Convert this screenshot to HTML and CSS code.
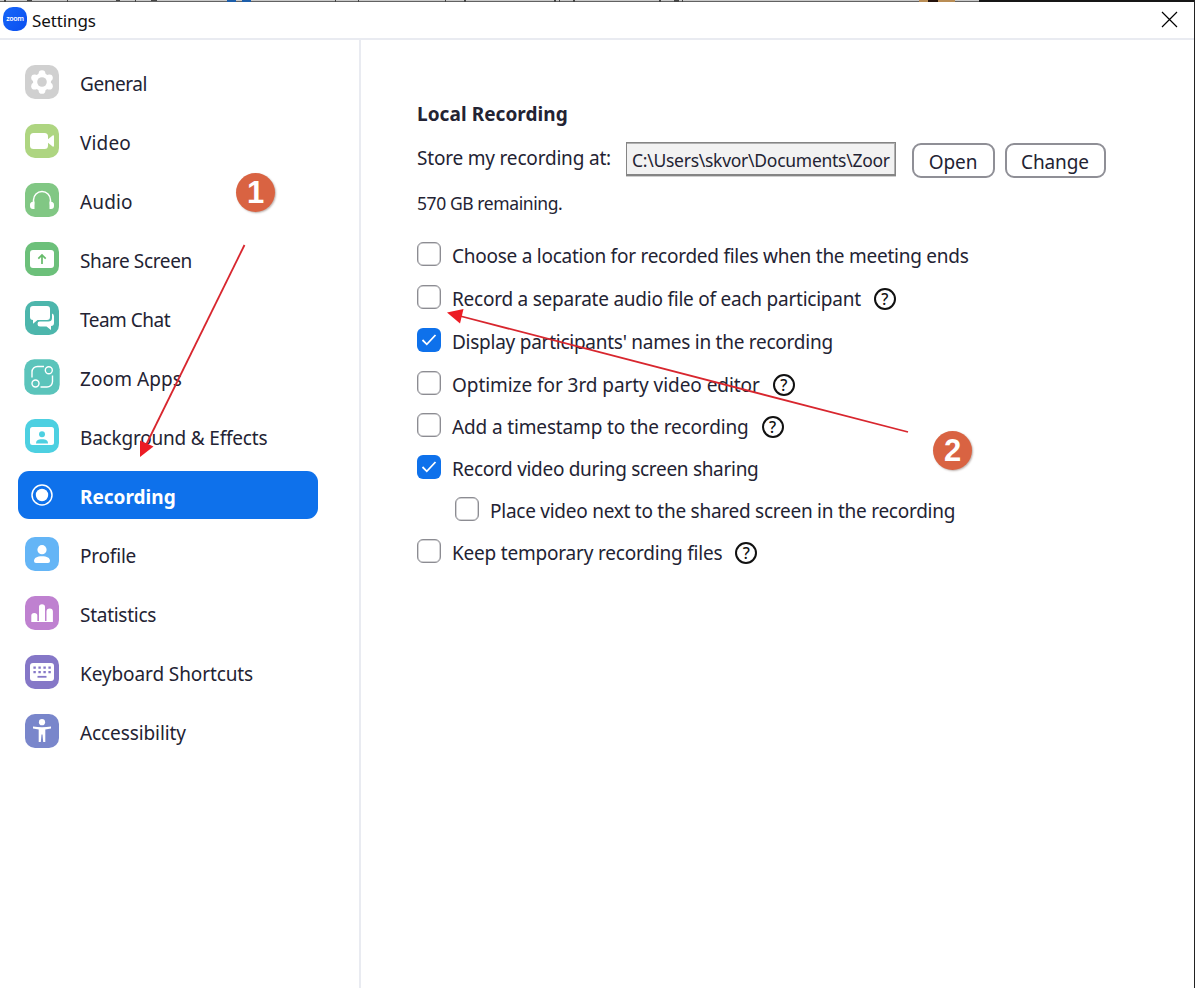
FILE: index.html
```html
<!DOCTYPE html>
<html lang="en">
<head>
<meta charset="utf-8">
<title>Settings</title>
<link rel="stylesheet" href="styles.css">
</head>
<body>
<div class="window">
  <svg class="backdrop" width="1195" height="2" viewBox="0 0 1195 2" shape-rendering="crispEdges">
    <path fill="#c9c9c9" d="M0 0h1195v1H0z"/><path fill="#626262" d="M0 1h1195v1H0z"/>
    <path fill="#444" d="M4 0h2v2H4zM27 0h5v1h-5zM67 0h1v2h-1zM116 0h4v1h-4zM135 0h1v2h-1zM151 0h6v1h-6zM335 0h1v2h-1zM358 0h1v2h-1zM445 0h1v2h-1zM464 0h2v2h-2zM554 0h2v2h-2zM559 0h1v2h-1zM573 0h2v2h-2zM659 0h2v2h-2zM674 0h5v2h-5zM682 0h1v2h-1z"/>
    <path fill="#1d5eaa" d="M227 0h9v2h-9zM242 0h9v2h-9z"/>
    <path fill="#b98d55" d="M919 0h36v2h-36z"/><path fill="#24120c" d="M928 0h10v2h-10z"/>
    <path fill="#161616" d="M979 0h216v2H979z"/>
  </svg>
  <header class="titlebar">
    <span class="logo">zoom</span>
    <h1 class="title">Settings</h1>
    <svg class="close" width="17" height="17" viewBox="0 0 17 17"><path d="M1 1l15 15M16 1L1 16" stroke="#000" stroke-width="1.2"/></svg>
  </header>
  <div class="body">
    <nav class="sidebar">
      <a class="item"><svg class="icon" viewBox="0 0 34 34"><rect width="34" height="34" rx="10" fill="#d0d0d0"/><g fill="#fff"><circle cx="17" cy="17" r="9"/><circle cx="17" cy="8.6" r="3.4"/><circle cx="17" cy="25.4" r="3.4"/><circle cx="9.6" cy="12.8" r="3.4"/><circle cx="24.4" cy="12.8" r="3.4"/><circle cx="9.6" cy="21.2" r="3.4"/><circle cx="24.4" cy="21.2" r="3.4"/></g><circle cx="17" cy="17" r="4.8" fill="#d0d0d0"/></svg><span class="label general">General</span></a>
      <a class="item"><svg class="icon" viewBox="0 0 34 34"><rect width="34" height="34" rx="10" fill="#aed581"/><rect x="5" y="9" width="18" height="16" rx="3.5" fill="#fff"/><path d="M23 15.2l4.6-3.6q1.4-.8 1.4.8v9.2q0 1.600-1.400.8L23 18.800z" fill="#fff"/></svg><span class="label video">Video</span></a>
      <a class="item"><svg class="icon" viewBox="0 0 34 34"><rect width="34" height="34" rx="10" fill="#81c784"/><path d="M8.500 21.500V17a8.500 8.500 0 0 1 17 0v4.500" fill="none" stroke="#fff" stroke-width="1.500"/><path d="M9.500 18.500v7.500H8a3 3 0 0 1-3-3v-1a3.200 3.200 0 0 1 3-3.200zM24.500 18.500v7.500H26a3 3 0 0 0 3-3v-1a3.200 3.200 0 0 0-3-3.200z" fill="#fff"/></svg><span class="label audio">Audio</span></a>
      <a class="item"><svg class="icon" viewBox="0 0 34 34"><rect width="34" height="34" rx="10" fill="#6cc07a"/><rect x="5" y="8" width="24" height="18" rx="3" fill="#fff"/><path d="M17 22v-8.500M13.300 16.600L17 13l3.700 3.600" fill="none" stroke="#66bb6a" stroke-width="1.700"/></svg><span class="label share">Share Screen</span></a>
      <a class="item"><svg class="icon" viewBox="0 0 34 34"><rect width="34" height="34" rx="10" fill="#4db6ac"/><path d="M8 5h14a3 3 0 0 1 3 3v8a3 3 0 0 1-3 3h-9.500L8 22.800V19a3 3 0 0 1-3-3V8a3 3 0 0 1 3-3z" fill="#fff"/><path d="M27 12.500a2.800 2.800 0 0 1 2 2.700V22a3 3 0 0 1-3 3v4l-4.500-3.500H15a2.600 2.600 0 0 1-2.500-2.600q0-2.300 2.300-2.300h8.400q3.800 0 3.800-3.600z" fill="#fff"/></svg><span class="label chat">Team Chat</span></a>
      <a class="item"><svg class="icon" viewBox="0 0 34 34"><rect x="-.7" y="-.7" width="35.400" height="35.400" rx="10" fill="#5bc4bb"/><g fill="none" stroke="#fff" stroke-width="1.400"><path d="M7 17.500V12a5.500 5.500 0 0 1 5.500-5.500H19M27.500 15.500v6A5.500 5.500 0 0 1 22 27h-6.500"/><circle cx="23.800" cy="10.200" r="3.500"/><circle cx="10.500" cy="23.500" r="3.500"/></g></svg><span class="label apps">Zoom Apps</span></a>
      <a class="item"><svg class="icon" viewBox="0 0 34 34"><rect width="34" height="34" rx="10" fill="#4dd0e1"/><rect x="5" y="8" width="24" height="18" rx="2.500" fill="#fff"/><circle cx="17" cy="15.300" r="3" fill="#4dd0e1"/><path d="M11 24.500c0-3 2-4.200 6-4.200s6 1.200 6 4.200z" fill="#4dd0e1"/></svg><span class="label effects">Background &amp; Effects</span></a>
      <a class="item active"><svg class="icon" viewBox="0 0 34 34"><circle cx="17" cy="17" r="10" fill="none" stroke="#fff" stroke-width="1.500"/><circle cx="17" cy="17" r="6.200" fill="#fff"/></svg><span class="label">Recording</span></a>
      <a class="item"><svg class="icon" viewBox="0 0 34 34"><rect width="34" height="34" rx="10" fill="#64b5f6"/><circle cx="17" cy="12.700" r="4.600" fill="#fff"/><path d="M9 24c0-3.200 3-4.800 8-4.800s8 1.600 8 4.800q0 2-2 2H11q-2 0-2-2z" fill="#fff"/></svg><span class="label profile">Profile</span></a>
      <a class="item"><svg class="icon" viewBox="0 0 34 34"><rect width="34" height="34" rx="10" fill="#bf81d0"/><path d="M6.300 26v-6.500q0-2.500 3-2.500t3 2.500V25h1.700V11q0-2.700 3-2.700t3 2.700v14h1.500V15.500q0-3 3.200-3t3.200 3V26z" fill="#fff"/></svg><span class="label stats">Statistics</span></a>
      <a class="item"><svg class="icon" viewBox="0 0 34 34"><rect width="34" height="34" rx="10" fill="#8577c7"/><rect x="5" y="8" width="24" height="18" rx="3" fill="#fff"/><path d="M8.400 12.600h18M8.400 17.100h18" stroke="#8577c7" stroke-width="2.400" stroke-dasharray="2.400 2.600"/><path d="M12.500 21.800h9" stroke="#8577c7" stroke-width="1.800"/></svg><span class="label keyboard">Keyboard Shortcuts</span></a>
      <a class="item"><svg class="icon" viewBox="0 0 34 34"><rect width="34" height="34" rx="10" fill="#7986cb"/><circle cx="17" cy="8.200" r="3.100" fill="#fff"/><path d="M8 12.600q9 1.200 18 0v1.900l-5.700.9v12.500h-2.100l-.7-7.500h-1l-.7 7.500h-2.100V15.400L8 14.500z" fill="#fff"/></svg><span class="label access">Accessibility</span></a>
    </nav>
    <main class="content">
      <h2 class="heading">Local Recording</h2>
      <div class="store">
        <span class="store-label">Store my recording at:</span>
        <div class="path">C:\Users\skvor\Documents\Zoor</div>
        <button class="btn open">Open</button>
        <button class="btn change">Change</button>
      </div>
      <p class="remaining">570 GB remaining.</p>
      <div class="options">
        <div class="option"><span class="box"></span><span class="text">Choose a location for recorded files when the meeting ends</span></div>
        <div class="option"><span class="box"></span><span class="text separate">Record a separate audio file of each participant</span><span class="help">?</span></div>
        <div class="option"><span class="box checked"><svg viewBox="0 0 24 24"><path d="M5.500 12l4.300 4.300 8.700-9.300"/></svg></span><span class="text">Display participants' names in the recording</span></div>
        <div class="option tight"><span class="box"></span><span class="text optimize">Optimize for 3rd party video editor</span><span class="help">?</span></div>
        <div class="option tight"><span class="box"></span><span class="text timestamp">Add a timestamp to the recording</span><span class="help">?</span></div>
        <div class="option tight"><span class="box checked"><svg viewBox="0 0 24 24"><path d="M5.500 12l4.300 4.300 8.700-9.300"/></svg></span><span class="text sharing">Record video during screen sharing</span></div>
        <div class="option tight nested"><span class="box"></span><span class="text">Place video next to the shared screen in the recording</span></div>
        <div class="option tight"><span class="box"></span><span class="text temporary">Keep temporary recording files</span><span class="help">?</span></div>
      </div>
    </main>
  </div>
  <svg class="arrows" width="1195" height="988" viewBox="0 0 1195 988">
    <g stroke="#d8262e" stroke-width="1.800"><path d="M244.500 245L146 445"/><path d="M908 432L460 316"/></g>
    <g fill="#ec1c24"><path d="M140 457V440.500L153.500 446.500z"/><path d="M447 312.500L463.500 309 460 323.500z"/></g>
  </svg>
  <span class="badge one">1</span>
  <span class="badge two">2</span>
</div>
</body>
</html>
```
FILE: styles.css
```css
* { box-sizing: border-box; }
body { margin: 0; font-family: "Noto Sans", sans-serif; font-size: 19px; color: #232333; background: #fff; }
h1, h2, p { margin: 0; font-weight: 400; }
.window { position: relative; display: flex; flex-direction: column; width: 1195px; height: 988px; overflow: hidden; border-right: 1px solid #222; }
.backdrop { display: block; flex: none; }
.titlebar { display: flex; flex: none; height: 38px; border-bottom: 2px solid #e9ebf1; padding: 0 16px 0 3px; }
.logo { width: 24px; height: 24px; margin-top: 5px; border-radius: 10px; background: linear-gradient(135deg, #1766f8, #0a4ff0); color: #fff; font-size: 7px; font-weight: 600; letter-spacing: -.3px; line-height: 23px; text-align: center; }
.title { margin: 7px 0 0 5px; font-size: 17px; letter-spacing: -.1px; line-height: 24px; color: #111; }
.close { margin: 9px 0 0 auto; }
.body { display: flex; flex: 1; }
.sidebar { display: flex; flex-direction: column; gap: 11px; width: 361px; padding: 18px 0 0 18px; border-right: 2px solid #e9ebf1; }
.item { display: flex; align-items: center; width: 300px; height: 48px; padding-left: 7px; border-radius: 11px; }
.icon { width: 34px; height: 34px; overflow: visible; }
.label { margin: 3px 0 0 21px; line-height: 24px; white-space: nowrap; }
.general { letter-spacing: -.43px; }
.video, .audio { letter-spacing: .15px; }
.share { letter-spacing: -.35px; }
.chat { letter-spacing: -.5px; }
.apps { letter-spacing: .1px; }
.effects { letter-spacing: -.2px; }
.profile { letter-spacing: -.2px; }
.stats { letter-spacing: -.27px; }
.keyboard, .access { letter-spacing: -.1px; }
.active { background: #0e71eb; color: #fff; font-weight: 700; }
.content { flex: 1; padding: 62px 0 0 56px; }
.heading { font-size: 19px; font-weight: 700; letter-spacing: .06px; line-height: 24px; }
.store { display: flex; align-items: flex-start; height: 52px; padding-top: 16px; }
.store-label { width: 209px; padding-top: 4px; letter-spacing: -.19px; line-height: 24px; white-space: nowrap; }
.path { width: 270px; height: 34px; padding: 5px 0 0 5px; background: #f2f2f2; border: 1px solid #858585; border-bottom: 2px solid #858585; box-shadow: 0 1px #cfcfcf, inset -1px 1px #b0b0b0; font-size: 17.500px; letter-spacing: -.27px; line-height: 24px; white-space: nowrap; }
.btn { height: 35px; margin-top: 1px; padding: 3px 0 0; border: 2px solid #8f8f96; border-radius: 9px; background: #fff; color: inherit; font: inherit; letter-spacing: -.1px; line-height: 24px; }
.open { width: 83px; margin-left: 16px; padding-right: 1px; }
.change { width: 101px; margin-left: 10px; padding-right: 1px; }
.remaining { padding-top: 13px; font-size: 17.500px; letter-spacing: -.41px; line-height: 24px; }
.options { padding-top: 27px; }
.option { display: flex; align-items: flex-start; height: 43px; }
.tight { height: 42px; }
.nested { padding-left: 38px; }
.box { width: 24px; height: 24px; border: 1px solid #8c8c92; border-radius: 6px; box-shadow: inset 0 0 0 .5px #a8a8ac; }
.checked { border: 0; background: #0e71eb; box-shadow: none; }
.checked svg { display: block; fill: none; stroke: #fff; stroke-width: 1.800; }
.text { margin: 2px 0 0 11px; letter-spacing: -.255px; line-height: 24px; white-space: nowrap; }
.separate { letter-spacing: -.235px; }
.optimize { letter-spacing: -.06px; }
.timestamp { letter-spacing: -.14px; }
.sharing { letter-spacing: -.3px; }
.temporary { letter-spacing: -.2px; }
.help { width: 22px; height: 22px; margin: 3px 0 0 13px; border: 2px solid #111; border-radius: 50%; color: #111; font-size: 16px; font-weight: 500; line-height: 18px; text-align: center; }
.arrows { position: absolute; left: 0; top: 0; }
.badge { position: absolute; width: 39px; height: 39px; border-radius: 50%; background: #d96342; box-shadow: 1px 1px 2px rgba(90, 60, 50, .4); color: #fff; font: 700 31px/40px "Liberation Sans", sans-serif; text-align: center; }
.one { left: 236px; top: 173px; }
.two { left: 933px; top: 431px; }
```
